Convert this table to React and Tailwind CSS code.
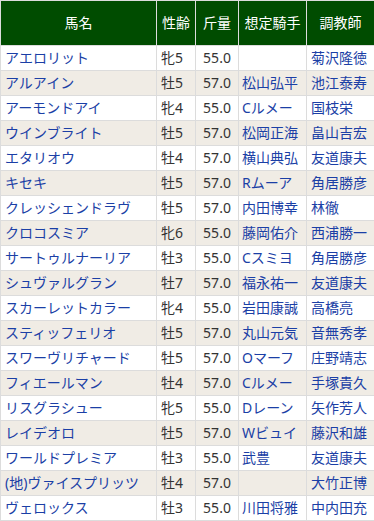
const rows = [
  ['アエロリット', '牝5', '55.0', '', '菊沢隆徳'],
  ['アルアイン', '牡5', '57.0', '松山弘平', '池江泰寿'],
  ['アーモンドアイ', '牝4', '55.0', 'Cルメー', '国枝栄'],
  ['ウインブライト', '牡5', '57.0', '松岡正海', '畠山吉宏'],
  ['エタリオウ', '牡4', '57.0', '横山典弘', '友道康夫'],
  ['キセキ', '牡5', '57.0', 'Rムーア', '角居勝彦'],
  ['クレッシェンドラヴ', '牡5', '57.0', '内田博幸', '林徹'],
  ['クロコスミア', '牝6', '55.0', '藤岡佑介', '西浦勝一'],
  ['サートゥルナーリア', '牡3', '55.0', 'Cスミヨ', '角居勝彦'],
  ['シュヴァルグラン', '牡7', '57.0', '福永祐一', '友道康夫'],
  ['スカーレットカラー', '牝4', '55.0', '岩田康誠', '高橋亮'],
  ['スティッフェリオ', '牡5', '57.0', '丸山元気', '音無秀孝'],
  ['スワーヴリチャード', '牡5', '57.0', 'Oマーフ', '庄野靖志'],
  ['フィエールマン', '牡4', '57.0', 'Cルメー', '手塚貴久'],
  ['リスグラシュー', '牝5', '55.0', 'Dレーン', '矢作芳人'],
  ['レイデオロ', '牡5', '57.0', 'Wビュイ', '藤沢和雄'],
  ['ワールドプレミア', '牡3', '55.0', '武豊', '友道康夫'],
  ['(地)ヴァイスプリッツ', '牡4', '57.0', '', '大竹正博'],
  ['ヴェロックス', '牡3', '55.0', '川田将雅', '中内田充'],
];

const heads = ['馬名', '性齢', '斤量', '想定騎手', '調教師'];
const grid = 'grid grid-cols-[156px_39px_43px_68px_68px]';

export default function App(){
  return (
    <div className="w-[374px] bg-white text-[14px] leading-none" style={{fontFamily: '"Noto Sans", "Noto Sans CJK JP", sans-serif'}}>
      <div className="border-t border-[#dcdcdc]">
        <div className={grid + ' h-[45px] border-b border-[#dcdcdc] bg-[#004c00] text-white'}>
          {heads.map((h, i) => (
            <div key={i} className={'flex items-center justify-center border-l border-[#dcdcdc] ' + (i === 0 ? 'border-l' : '')}>{h}</div>
          ))}
        </div>
        {rows.map((r, i) => (
          <div key={i} className={grid + ' h-[25px] border-b border-[#dcdcdc] ' + (i % 2 ? 'bg-[#f0ece5]' : 'bg-white')}>
            <div className="flex items-center border-l border-[#dcdcdc] pl-[4px] text-[#1b3fa6] whitespace-nowrap">{r[0]}</div>
            <div className="flex items-center border-l border-[#dcdcdc] pl-[4px] text-[#333]">{r[1]}</div>
            <div className="flex items-center justify-center border-l border-[#dcdcdc] text-[#333]">{r[2]}</div>
            <div className="flex items-center border-l border-[#dcdcdc] pl-[3px] text-[#1b3fa6] whitespace-nowrap">{r[3]}</div>
            <div className="flex items-center border-l border-[#dcdcdc] pl-[4px] text-[#1b3fa6] whitespace-nowrap">{r[4]}</div>
          </div>
        ))}
      </div>
    </div>
  );
}
